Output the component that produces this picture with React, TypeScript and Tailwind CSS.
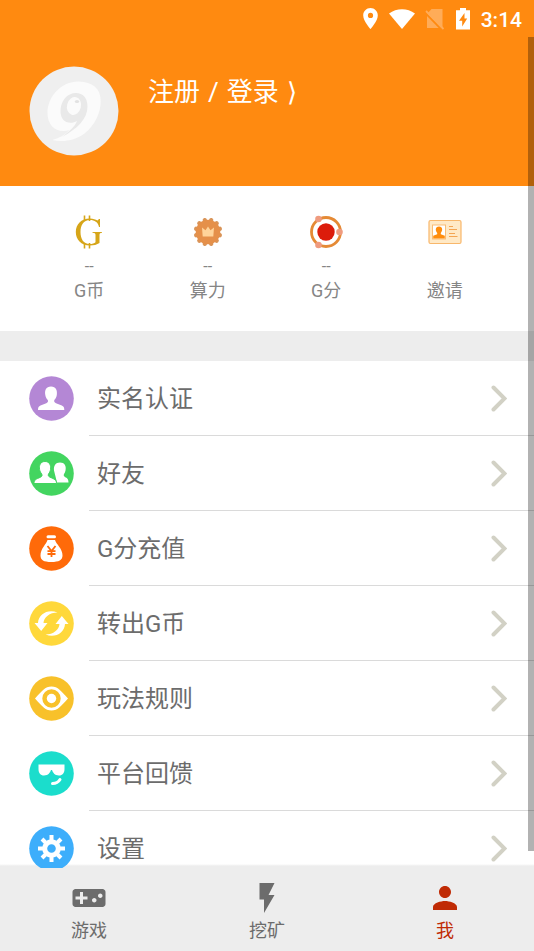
import React from "react";
import { MdFlashOn, MdLocationOn, MdPerson, MdVideogameAsset } from "react-icons/md";

function StatusBar() {
  return (
    <div className="flex h-[37px] items-center justify-end pr-3 text-white">
      <MdLocationOn className="size-[25px]" aria-hidden="true" />
      <svg className="ml-1.5 h-[22px] w-[26px]" viewBox="0 0 26 22" fill="currentColor" aria-hidden="true">
        <path d="M0 5.500C7.500-.2 18.500-.2 26 5.500L13 21z" />
      </svg>
      <svg className="ml-2.5 h-[22px] w-[20px]" viewBox="0 0 20 22" aria-hidden="true">
        <path d="M6.500 1H17.500V20H2V6z" fill="#ffac58" />
        <path d="M0 4.500L17 22" stroke="#ff8a10" strokeWidth="2" />
        <path d="M1 3L18.500 21" stroke="#ffac58" strokeWidth="1.800" />
      </svg>
      <svg className="ml-2.5 h-[22px] w-[16px]" viewBox="0 0 16 22" fill="currentColor" aria-hidden="true">
        <path fillRule="evenodd" d="M5 0h6v2.200h4V21.500H1V2.200h4zM9.500 5L4 12.800h3.200V18.500L12.200 10.500H9.500z" />
      </svg>
      <span className="ml-2.5 pt-0.5 text-[21px] leading-6 font-medium">3:14</span>
    </div>
  );
}

function Avatar() {
  return (
    <svg className="size-[90px] shrink-0" viewBox="0 0 90 90" aria-hidden="true">
      <circle cx="45" cy="45" r="44.500" fill="#efefef" />
      <path fill="#fbfbfb" d="M50 15.500C33 15 18.500 30 18.500 47c0 11 6.500 18 16 18 2 0 4-.3 6-1-5 5-10 8-17 10 10 2.500 23 .5 32-6.500C66 59 71.700 47 71.700 35 71.700 22 63 16 50 15.500z" />
      <path fill="#e9e9e9" d="M47 27c7 0 11.500 5 11.500 13.500C58.500 53 48 63 33 71c9-7 13-11 15-16-2 1.200-4 1.800-6.500 1.800-6 0-10-4.500-10-11.800C31.500 35 38 27 47 27z" />
      <ellipse cx="45" cy="40" rx="7" ry="9" fill="#fbfbfb" transform="rotate(15 45 40)" />
      <ellipse cx="48" cy="35.500" rx="2.200" ry="1.500" fill="#e2e2e2" />
    </svg>
  );
}

function CoinIcon() {
  return (
    <svg className="size-[34px]" viewBox="0 0 34 34" fill="#d6a519" aria-hidden="true">
      <path d="M12.500 0.500V6M17.500 0.500V6M12.500 28V33.500M17.500 28V33.500" stroke="#d6a519" strokeWidth="1.600" />
      <path d="M28 4v8h-1c-1-5-4.500-7-9-7C11.500 5 8.500 10 8.500 17s3 12 9 12c3 0 4.800-.8 6-1.800V20c0-1.500-.7-2-3-2.200V17H30v.8c-1.800.2-2.500.7-2.500 2.200v8c-2.500 1.700-6 2.500-9.500 2.500C9 30.500 3.800 24.500 3.800 17S9 3.500 18 3.500c3.300 0 5.500 1 7.500 2L27 4z" />
    </svg>
  );
}

const lobes = [0, 30, 60, 90, 120, 150, 180, 210, 240, 270, 300, 330];

function PowerIcon() {
  return (
    <svg className="size-[34px]" viewBox="0 0 34 34" aria-hidden="true">
      {lobes.map((a) => (
        <circle key={a} cx="17" cy="4.800" r="2.200" fill="#d99458" transform={`rotate(${a + 15} 17 17)`} />
      ))}
      <circle cx="17" cy="17" r="12.300" fill="#e5904a" />
      <path d="M11 12.500l3.500 2.800L17 11.500l2.500 3.800 3.500-2.800-.7 9H11.700z" fill="#ffd49a" />
    </svg>
  );
}

function ScoreIcon() {
  return (
    <svg className="size-[34px]" viewBox="0 0 34 34" aria-hidden="true">
      <circle cx="17" cy="17" r="14.500" fill="none" stroke="#e58a35" strokeWidth="2.800" />
      <circle cx="17" cy="17" r="8.700" fill="#dc1c0b" />
      <circle cx="9.500" cy="4" r="3.300" fill="#ef9b7f" />
      <circle cx="9.500" cy="30" r="3.300" fill="#ef9b7f" />
      <circle cx="30.500" cy="17" r="3.300" fill="#ef9b7f" />
    </svg>
  );
}

function InviteIcon() {
  return (
    <svg className="size-[34px]" viewBox="0 0 34 34" aria-hidden="true">
      <rect x="1" y="5.500" width="32" height="23" rx="1.500" fill="#ffe9c6" stroke="#f8b76b" strokeWidth="1.200" />
      <rect x="4.500" y="10" width="13" height="14" fill="#fff" stroke="#f9bd76" />
      <path d="M11 11.500c4 0 3.800 4.300 1.800 6.500v1.200l4 1.600V23.500H5.200v-2.700l4-1.600V18C7.200 15.800 7 11.500 11 11.500z" fill="#ff8d0c" />
      <path d="M21 11.500h4M21 14.500h8M21 18.500h6M21 21.500h8.500" stroke="#f4a552" strokeWidth="1.200" />
    </svg>
  );
}

const stats = [
  { label: "G币", value: "--", icon: <CoinIcon /> },
  { label: "算力", value: "--", icon: <PowerIcon /> },
  { label: "G分", value: "--", icon: <ScoreIcon /> },
  { label: "邀请", value: "", icon: <InviteIcon /> },
];

const bust = "M22 10.500c5 0 6.500 4 5.800 8.500-.3 2-1.300 3.800-2.300 4.800-.8 1.200-.2 2.700 1.500 3.400l5.800 2.300c1.800.8 2.500 2 2.500 4.500H9c0-2.500.7-3.700 2.500-4.500l5.800-2.300c1.700-.7 2.200-2.200 1.300-3.400-1-1-2-2.800-2.300-4.800C15.500 14.500 17 10.500 22 10.500z";

const menu = [
  { label: "实名认证", color: "#b487d5", art: <path d={bust} fill="#fff" /> },
  {
    label: "好友",
    color: "#43d560",
    art: (
      <g fill="#fff">
        <path d="M31 11.500c4.500 0 6.500 3.500 5.500 8-.3 1.500-.8 2.500-1.500 3.500-.7 1.500 0 2.500 1.300 3.200 2.500 1 3.200 2.500 3.200 5.300H28l-3-12c-.5-4.500 1.500-8 6-8z" />
        <path d="M16 10.500c4.500 0 6.200 3.700 5.500 8-.3 2-1 3.200-2 4.500-.7 1.500 0 2.500 1.500 3.200 4.500 2 6.500 2.500 6.500 6.300H5c0-3.800 2-4.300 6.500-6.300 1.500-.7 2-1.700 1.200-3.200-1-1.300-1.800-2.500-2.100-4.500-.8-4.300.9-8 5.400-8z" stroke="#43d560" strokeWidth="1" />
      </g>
    ),
  },
  {
    label: "G分充值",
    color: "#ff6a09",
    art: (
      <g>
        <rect x="17.500" y="9.300" width="9.500" height="3" rx="1.500" fill="#fff" />
        <path d="M18.500 14h7.500c1 4 7.500 8.500 7.500 15.500 0 4.500-3.500 6.500-11.200 6.500S11.500 34 11.500 29.500C11.500 22.500 17.500 18 18.500 14z" fill="#fff" />
        <path d="M18.500 20l4 5 4-5M22.500 25v6M18.500 25.200h8M18.500 28h8" fill="none" stroke="#ff6a09" strokeWidth="1.800" />
      </g>
    ),
  },
  {
    label: "转出G币",
    color: "#ffd83b",
    art: (
      <g fill="#fff">
        <path d="M28.500 11.500C19 7.500 9.500 13 9 22H5.500l6.700 8 6.300-8h-4c.3-5.500 6-10.500 14-10.500z" />
        <path d="M16.500 33.500C26 37.500 35.500 32 36 23h3.500l-6.700-8-6.300 8h4c-.3 5.500-6 10.500-14 10.500z" />
      </g>
    ),
  },
  {
    label: "玩法规则",
    color: "#f8c12a",
    art: (
      <g>
        <path fillRule="evenodd" fill="#fff" d="M6 22.500C13 15 16 10.500 22.500 10.500S32 15 39 22.500C32 30 29 34.500 22.500 34.500S13 30 6 22.500zM22.500 13.300a9.200 9.200 0 1 0 0 18.400 9.200 9.200 0 0 0 0-18.400z" />
        <circle cx="22.500" cy="22.500" r="4.700" fill="#fff" />
      </g>
    ),
  },
  {
    label: "平台回馈",
    color: "#1bddcc",
    art: (
      <g>
        <path d="M9.500 13.500h26v4.500c0 4-2 6.500-5.500 6.500-4.500 0-6-3-7-5.500h-1c-1 2.500-2.500 5.500-7 5.500-3.500 0-5.500-2.500-5.500-6.500z" fill="#fff" />
        <path d="M23.500 32.500c3.500 0 6-1.500 7.500-4" fill="none" stroke="#fff" strokeWidth="3" strokeLinecap="round" />
      </g>
    ),
  },
  {
    label: "设置",
    color: "#3daefb",
    art: (
      <g>
        <circle cx="22.500" cy="22.500" r="6.800" fill="none" stroke="#fff" strokeWidth="5" />
        <path d="M22.500 9v5M22.500 31v5M9 22.500h5M31 22.500h5M13 13l3.500 3.500M28.500 28.500L32 32M13 32l3.500-3.500M28.500 16.500L32 13" stroke="#fff" strokeWidth="4" />
      </g>
    ),
  },
];

const tabs = [
  { label: "游戏", icon: MdVideogameAsset, tone: "text-[#6c6c6c]" },
  { label: "挖矿", icon: MdFlashOn, tone: "text-[#6c6c6c]" },
  { label: "我", icon: MdPerson, tone: "text-[#c02b05]" },
];

export default function App() {
  return (
    <div className="relative flex h-screen flex-col bg-[#ededed] font-[Roboto,'Noto_Sans_CJK_SC',sans-serif] text-[#6c6c6c]">
      <header className="shrink-0 bg-[#ff8a10]">
        <StatusBar />
        <div className="flex h-[149px] items-start gap-[29px] px-[29px] pt-[29px]">
          <Avatar />
          <button type="button" className="mt-2 flex gap-2 text-[26px] leading-9 text-white">
            <span>注册</span>
            <span>/</span>
            <span>登录</span>
            <span>⟩</span>
          </button>
        </div>
      </header>

      <main className="min-h-0 flex-1 overflow-hidden bg-[linear-gradient(to_top,#ededed_2px,#fff_4px)]">
        <section className="grid h-[145px] grid-cols-4 px-[30px] pt-[29px]">
          {stats.map((s) => (
            <button type="button" key={s.label} className="flex flex-col items-center text-[#858585]">
              {s.icon}
              <span className="h-7 pt-1.5 text-base leading-6">{s.value}</span>
              <span className="text-lg leading-7">{s.label}</span>
            </button>
          ))}
        </section>
        <div className="h-[30px] bg-[#ededed]" />
        <ul>
          {menu.map((m) => (
            <li key={m.label}>
              <button type="button" className="flex h-[75px] w-full items-center pl-[29px] text-left">
                <svg className="size-[45px] shrink-0" viewBox="0 0 45 45" aria-hidden="true">
                  <circle cx="22.500" cy="22.500" r="22.300" fill={m.color} />
                  {m.art}
                </svg>
                <span className="ml-[15px] flex h-full flex-1 items-center justify-between border-b border-[#dadada] pr-[27px] pl-2">
                  <span className="pt-0.5 text-2xl leading-9">{m.label}</span>
                  <svg className="h-[27px] w-4" viewBox="0 0 16 27" fill="none" stroke="#d2d1c5" strokeWidth="4" aria-hidden="true">
                    <path d="M2.500 2.500L13.500 13.500L2.500 24.500" strokeLinecap="round" />
                  </svg>
                </span>
              </button>
            </li>
          ))}
        </ul>
      </main>

      <nav className="grid h-[83px] shrink-0 grid-cols-3 bg-[#ededed]">
        {tabs.map(({ label, icon: Icon, tone }) => (
          <button type="button" key={label} className={"flex flex-col items-center pt-3 " + tone}>
            <span className="h-[39px]">
              <Icon className="size-9" aria-hidden="true" />
            </span>
            <span className="text-lg leading-6">{label}</span>
          </button>
        ))}
      </nav>

      <div className="pointer-events-none absolute top-[37px] right-0 bottom-[100px] w-1.5 bg-black/30" />
    </div>
  );
}
